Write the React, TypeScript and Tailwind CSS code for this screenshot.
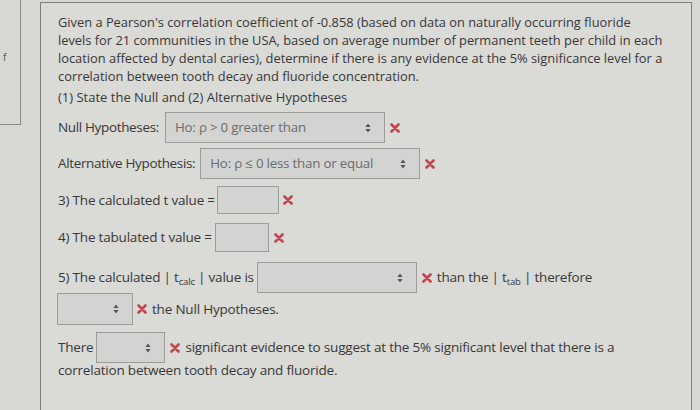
import React from "react";

const font = { fontFamily: '"Open Sans", "Noto Sans", sans-serif' };

function XMark() {
  return (
    <svg width="10" height="10" viewBox="0 0 10 10" className="shrink-0">
      <path d="M1.5 1.5 L8.5 8.5 M8.5 1.5 L1.5 8.5" stroke="#c2454f" strokeWidth="2.6" strokeLinecap="round" />
    </svg>
  );
}

function UpDown() {
  return (
    <svg width="6" height="10" viewBox="0 0 6 10" className="shrink-0">
      <path d="M3 0.5 L5.6 4 L0.4 4 Z" fill="#555" />
      <path d="M3 9.5 L5.6 6 L0.4 6 Z" fill="#555" />
    </svg>
  );
}

function Select({ w, h = 31, text }: { w: string; h?: number; text?: string }) {
  return (
    <div
      className={`${w} flex items-center justify-between border border-[#9c9c9a] bg-[#d3d4d2] pl-[9px] pr-[13px] shrink-0`}
      style={{ height: h }}
    >
      <span className="text-[13.3px] text-[#6b6b6b] tracking-[-0.2px] whitespace-nowrap">{text}</span>
      <UpDown />
    </div>
  );
}

function Input({ w, h }: { w: string; h: string }) {
  return <div className={`${w} ${h} border border-[#9c9c9a] bg-[#d3d4d2] shrink-0`} />;
}

export default function App() {
  return (
    <div
      className="w-[700px] h-[410px] overflow-hidden bg-[#d7d7d3] flex text-[#383838]"
      style={font}
    >
      <div className="w-[40px] shrink-0">
        <div className="w-[21px] h-[125px] border-r border-b border-[#8a8a88] flex items-center pl-[3px] text-[10px] text-[#555]">
          <span className="mt-[-10px]">f</span>
        </div>
      </div>
      <div className="mt-[2px] w-[652px] h-[420px] border-l border-t border-r border-[#7e7e7c] bg-[#dadad6] pl-[17px] pt-[10px] shrink-0">
        <div className="text-[12.85px] leading-[18px] whitespace-nowrap">
          <div>Given a Pearson's correlation coefficient of -0.858 (based on data on naturally occurring fluoride</div>
          <div>levels for 21 communities in the USA, based on average number of permanent teeth per child in each</div>
          <div>location affected by dental caries), determine if there is any evidence at the 5% significance level for a</div>
          <div>correlation between tooth decay and fluoride concentration.</div>
        </div>
        <div className="mt-[3px] text-[13px] leading-[18px]">(1) State the Null and (2) Alternative Hypotheses</div>

        <div className="mt-[6px] flex items-center text-[13.5px] tracking-[-0.35px]">
          <span className="mr-[6px]">Null Hypotheses:</span>
          <Select w="w-[220px]" text="Ho: ρ > 0 greater than" />
          <span className="ml-[5px]"><XMark /></span>
        </div>

        <div className="mt-[5px] flex items-center text-[13.5px] tracking-[-0.35px]">
          <span className="mr-[5px]">Alternative Hypothesis:</span>
          <Select w="w-[220px]" text="Ho: ρ ≤ 0 less than or equal" />
          <span className="ml-[5px]"><XMark /></span>
        </div>

        <div className="mt-[7px] flex items-center text-[13.5px] tracking-[-0.2px]">
          <span className="mr-[2px]">3) The calculated t value =</span>
          <Input w="w-[62px]" h="h-[28px]" />
          <span className="ml-[4px]"><XMark /></span>
        </div>

        <div className="mt-[9px] flex items-center text-[13.5px] tracking-[-0.2px]">
          <span className="mr-[3px]">4) The tabulated t value =</span>
          <Input w="w-[54px]" h="h-[29px]" />
          <span className="ml-[5px]"><XMark /></span>
        </div>

        <div className="mt-[10px] flex items-center text-[13.5px] tracking-[-0.2px]">
          <span className="mr-[3px]">
            5) The calculated | t<sub className="text-[9.5px]">calc</sub> | value is
          </span>
          <Select w="w-[160px]" />
          <span className="ml-[5px] mr-[5px]"><XMark /></span>
          <span>
            than the | t<sub className="text-[9.5px]">tab</sub> | therefore
          </span>
        </div>

        <div className="mt-[0px] -ml-[1px] flex items-center text-[13.5px] tracking-[-0.2px]">
          <Select w="w-[76px]" h={32} />
          <span className="ml-[4px] mr-[5px]"><XMark /></span>
          <span>the Null Hypotheses.</span>
        </div>

        <div className="mt-[7px] flex items-center text-[13.5px] tracking-[-0.2px]">
          <span className="mr-[3px]">There</span>
          <Select w="w-[69px]" />
          <span className="ml-[5px] mr-[5px]"><XMark /></span>
          <span>significant evidence to suggest at the 5% significant level that there is a</span>
        </div>
        <div className="mt-[-2px] text-[13.5px] leading-[18px] tracking-[-0.2px]">correlation between tooth decay and fluoride.</div>
      </div>
    </div>
  );
}
